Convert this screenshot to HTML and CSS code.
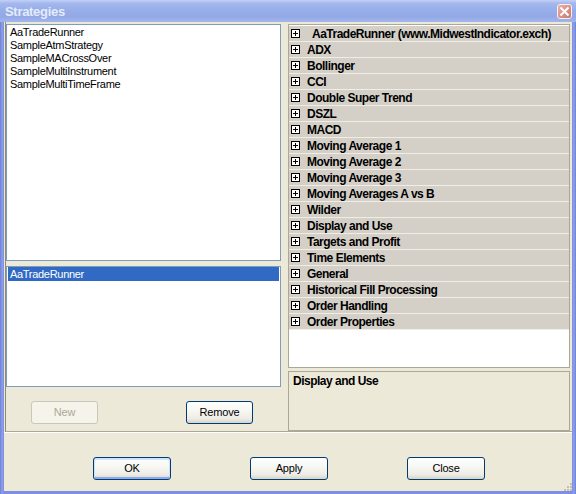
FILE: index.html
```html
<!DOCTYPE html>
<html>
<head>
<meta charset="utf-8">
<link rel="stylesheet" href="styles.css">
</head>
<body>
<div class="window">
  <div class="titlebar">
    <span class="title">Strategies</span>
    <svg class="close" width="15" height="15" viewBox="0 0 15 15">
      <defs>
        <linearGradient id="cg" x1="0" y1="0" x2="1" y2="1">
          <stop offset="0" stop-color="#EDB2A8"/>
          <stop offset="1" stop-color="#C9756B"/>
        </linearGradient>
      </defs>
      <rect x="0.5" y="0.5" width="14" height="14" rx="2.5" fill="url(#cg)" stroke="#F4F0F8"/>
      <path d="M4.2 4.2 L10.8 10.8 M10.8 4.2 L4.2 10.8" stroke="#fff" stroke-width="2" stroke-linecap="square"/>
    </svg>
  </div>
  <div class="body">
    <div class="panel">
      <div class="left">
        <div class="list list-top">
          <div class="item">AaTradeRunner</div>
          <div class="item">SampleAtmStrategy</div>
          <div class="item">SampleMACrossOver</div>
          <div class="item">SampleMultiInstrument</div>
          <div class="item">SampleMultiTimeFrame</div>
        </div>
        <div class="list list-bottom">
          <div class="item selected">AaTradeRunner</div>
        </div>
        <div class="left-buttons">
          <button class="btn small disabled">New</button>
          <button class="btn small">Remove</button>
        </div>
      </div>
      <div class="right">
        <div class="grid">
          <div class="row"><svg class="plus" width="9" height="9" viewBox="0 0 9 9"><rect x="0.5" y="0.5" width="8" height="8" fill="#fff" stroke="#000"/><path d="M2 4.5H7M4.5 2V7" stroke="#000"/></svg><span class="label first">AaTradeRunner (www.MidwestIndicator.exch)</span></div>
          <div class="row"><svg class="plus" width="9" height="9" viewBox="0 0 9 9"><rect x="0.5" y="0.5" width="8" height="8" fill="#fff" stroke="#000"/><path d="M2 4.5H7M4.5 2V7" stroke="#000"/></svg><span class="label">ADX</span></div>
          <div class="row"><svg class="plus" width="9" height="9" viewBox="0 0 9 9"><rect x="0.5" y="0.5" width="8" height="8" fill="#fff" stroke="#000"/><path d="M2 4.5H7M4.5 2V7" stroke="#000"/></svg><span class="label">Bollinger</span></div>
          <div class="row"><svg class="plus" width="9" height="9" viewBox="0 0 9 9"><rect x="0.5" y="0.5" width="8" height="8" fill="#fff" stroke="#000"/><path d="M2 4.5H7M4.5 2V7" stroke="#000"/></svg><span class="label">CCI</span></div>
          <div class="row"><svg class="plus" width="9" height="9" viewBox="0 0 9 9"><rect x="0.5" y="0.5" width="8" height="8" fill="#fff" stroke="#000"/><path d="M2 4.5H7M4.5 2V7" stroke="#000"/></svg><span class="label">Double Super Trend</span></div>
          <div class="row"><svg class="plus" width="9" height="9" viewBox="0 0 9 9"><rect x="0.5" y="0.5" width="8" height="8" fill="#fff" stroke="#000"/><path d="M2 4.5H7M4.5 2V7" stroke="#000"/></svg><span class="label">DSZL</span></div>
          <div class="row"><svg class="plus" width="9" height="9" viewBox="0 0 9 9"><rect x="0.5" y="0.5" width="8" height="8" fill="#fff" stroke="#000"/><path d="M2 4.5H7M4.5 2V7" stroke="#000"/></svg><span class="label">MACD</span></div>
          <div class="row"><svg class="plus" width="9" height="9" viewBox="0 0 9 9"><rect x="0.5" y="0.5" width="8" height="8" fill="#fff" stroke="#000"/><path d="M2 4.5H7M4.5 2V7" stroke="#000"/></svg><span class="label">Moving Average 1</span></div>
          <div class="row"><svg class="plus" width="9" height="9" viewBox="0 0 9 9"><rect x="0.5" y="0.5" width="8" height="8" fill="#fff" stroke="#000"/><path d="M2 4.5H7M4.5 2V7" stroke="#000"/></svg><span class="label">Moving Average 2</span></div>
          <div class="row"><svg class="plus" width="9" height="9" viewBox="0 0 9 9"><rect x="0.5" y="0.5" width="8" height="8" fill="#fff" stroke="#000"/><path d="M2 4.5H7M4.5 2V7" stroke="#000"/></svg><span class="label">Moving Average 3</span></div>
          <div class="row"><svg class="plus" width="9" height="9" viewBox="0 0 9 9"><rect x="0.5" y="0.5" width="8" height="8" fill="#fff" stroke="#000"/><path d="M2 4.5H7M4.5 2V7" stroke="#000"/></svg><span class="label">Moving Averages A vs B</span></div>
          <div class="row"><svg class="plus" width="9" height="9" viewBox="0 0 9 9"><rect x="0.5" y="0.5" width="8" height="8" fill="#fff" stroke="#000"/><path d="M2 4.5H7M4.5 2V7" stroke="#000"/></svg><span class="label">Wilder</span></div>
          <div class="row"><svg class="plus" width="9" height="9" viewBox="0 0 9 9"><rect x="0.5" y="0.5" width="8" height="8" fill="#fff" stroke="#000"/><path d="M2 4.5H7M4.5 2V7" stroke="#000"/></svg><span class="label">Display and Use</span></div>
          <div class="row"><svg class="plus" width="9" height="9" viewBox="0 0 9 9"><rect x="0.5" y="0.5" width="8" height="8" fill="#fff" stroke="#000"/><path d="M2 4.5H7M4.5 2V7" stroke="#000"/></svg><span class="label">Targets and Profit</span></div>
          <div class="row"><svg class="plus" width="9" height="9" viewBox="0 0 9 9"><rect x="0.5" y="0.5" width="8" height="8" fill="#fff" stroke="#000"/><path d="M2 4.5H7M4.5 2V7" stroke="#000"/></svg><span class="label">Time Elements</span></div>
          <div class="row"><svg class="plus" width="9" height="9" viewBox="0 0 9 9"><rect x="0.5" y="0.5" width="8" height="8" fill="#fff" stroke="#000"/><path d="M2 4.5H7M4.5 2V7" stroke="#000"/></svg><span class="label">General</span></div>
          <div class="row"><svg class="plus" width="9" height="9" viewBox="0 0 9 9"><rect x="0.5" y="0.5" width="8" height="8" fill="#fff" stroke="#000"/><path d="M2 4.5H7M4.5 2V7" stroke="#000"/></svg><span class="label">Historical Fill Processing</span></div>
          <div class="row"><svg class="plus" width="9" height="9" viewBox="0 0 9 9"><rect x="0.5" y="0.5" width="8" height="8" fill="#fff" stroke="#000"/><path d="M2 4.5H7M4.5 2V7" stroke="#000"/></svg><span class="label">Order Handling</span></div>
          <div class="row"><svg class="plus" width="9" height="9" viewBox="0 0 9 9"><rect x="0.5" y="0.5" width="8" height="8" fill="#fff" stroke="#000"/><path d="M2 4.5H7M4.5 2V7" stroke="#000"/></svg><span class="label">Order Properties</span></div>
        </div>
        <div class="desc">Display and Use</div>
      </div>
    </div>
    <div class="footer">
      <button class="btn default">OK</button>
      <button class="btn">Apply</button>
      <button class="btn">Close</button>
      <svg class="grip" width="9" height="9" viewBox="0 0 9 9">
        <rect x="7" y="1" width="2" height="2" fill="#C2BFB0"/>
        <rect x="4" y="4" width="2" height="2" fill="#C2BFB0"/>
        <rect x="7" y="4" width="2" height="2" fill="#C2BFB0"/>
        <rect x="1" y="7" width="2" height="2" fill="#C2BFB0"/>
        <rect x="4" y="7" width="2" height="2" fill="#C2BFB0"/>
        <rect x="7" y="7" width="2" height="2" fill="#C2BFB0"/>
      </svg>
    </div>
  </div>
</div>
</body>
</html>
```
FILE: styles.css
```css
html, body {
  margin: 0;
  padding: 0;
}
body {
  width: 576px;
  height: 494px;
  overflow: hidden;
  font-family: "Liberation Sans", Arial, sans-serif;
  font-size: 11px;
  background: #ECE9D8;
}
.window {
  width: 576px;
  height: 494px;
  display: flex;
  flex-direction: column;
  background: linear-gradient(to right, #6C7FDA 0, #8DA0E6 2px, #7D90E0 4px, #7D90E0 572px, #8DA0E6 574px, #6C7FDA 576px);
}
.titlebar {
  height: 22px;
  flex: none;
  display: flex;
  align-items: center;
  padding: 0 4px 0 5px;
  box-sizing: border-box;
  background: linear-gradient(to bottom, #C3D1F5 0%, #A4B8EE 15%, #98AEE9 45%, #93A8E6 75%, #A3B6EC 100%);
}
.title {
  flex: 1;
  font-weight: bold;
  font-size: 13px;
  color: #E4EBFA;
  letter-spacing: -0.3px;
  padding-top: 1px;
}
.close {
  display: block;
  margin-top: 1px;
}
.body {
  flex: 1;
  margin: 0 4px 3px 4px;
  background: #ECE9D8;
  display: flex;
  flex-direction: column;
}
.panel {
  margin-left: 1px;
  border-left: 1px solid #8E8B7E;
  border-bottom: 1px solid #ACA899;
  height: 407px;
  padding: 2px 2px 0 0;
  display: flex;
  gap: 7px;
  flex: none;
}
.left {
  width: 275px;
  display: flex;
  flex-direction: column;
}
.list {
  box-sizing: border-box;
  border: 1px solid #7F9DB9;
  background: #fff;
  letter-spacing: -0.3px;
}
.list-top {
  height: 237px;
  padding: 1px 0 0 3px;
}
.list-top .item {
  line-height: 13px;
  height: 13px;
}
.list-bottom {
  margin-top: 5px;
  height: 121px;
  padding: 0 1px;
}
.item.selected {
  background: #316AC5;
  color: #fff;
  height: 14px;
  line-height: 14px;
  padding-left: 2px;
}
.left-buttons {
  margin-top: 14px;
  display: flex;
  padding-left: 25px;
  gap: 88px;
}
.btn {
  width: 78px;
  height: 23px;
  box-sizing: border-box;
  border: 1px solid #003C74;
  border-radius: 3px;
  background: linear-gradient(to bottom, #FFFFFF 0%, #F6F6F2 45%, #EDEBE4 80%, #D8D3C7 100%);
  font-family: "Liberation Sans", Arial, sans-serif;
  font-size: 11px;
  color: #000;
  padding: 0 0 2px 0;
  margin: 0;
  letter-spacing: -0.2px;
}
.btn.small {
  width: 67px;
}
.btn.disabled {
  border-color: #C9C7BA;
  background: #F5F4EA;
  color: #ACA899;
}
.btn.default {
  box-shadow: inset 0 1px 0 1px #CEE3FC, inset 0 -1px 0 1px #8FA9EE;
}
.right {
  width: 282px;
  display: flex;
  flex-direction: column;
}
.grid {
  height: 344px;
  box-sizing: border-box;
  border: 1px solid #ACA899;
  background: #fff;
  padding-top: 1px;
}
.row {
  height: 15px;
  border-bottom: 1px solid #EFEDE6;
  background: #D4D0C8;
  display: flex;
  align-items: center;
  font-weight: bold;
  font-size: 12px;
  color: #000;
  letter-spacing: -0.5px;
}
.plus {
  display: block;
  flex: none;
  margin-left: 2px;
  margin-right: 7px;
}
.label {
  line-height: 15px;
  white-space: nowrap;
  padding-top: 1px;
}
.label.first {
  padding-left: 5px;
}
.desc {
  margin-top: 3px;
  height: 60px;
  box-sizing: border-box;
  border: 1px solid #ACA899;
  background: #ECE9D8;
  padding: 3px 0 0 4px;
  font-weight: bold;
  font-size: 12px;
  letter-spacing: -0.5px;
  line-height: 13px;
}
.footer {
  flex: 1;
  border-top: 1px solid #fff;
  padding: 24px 0 0 89px;
  display: flex;
  align-items: flex-start;
  gap: 79px;
  position: relative;
}
.grip {
  position: absolute;
  right: 0;
  bottom: 0;
}
```
